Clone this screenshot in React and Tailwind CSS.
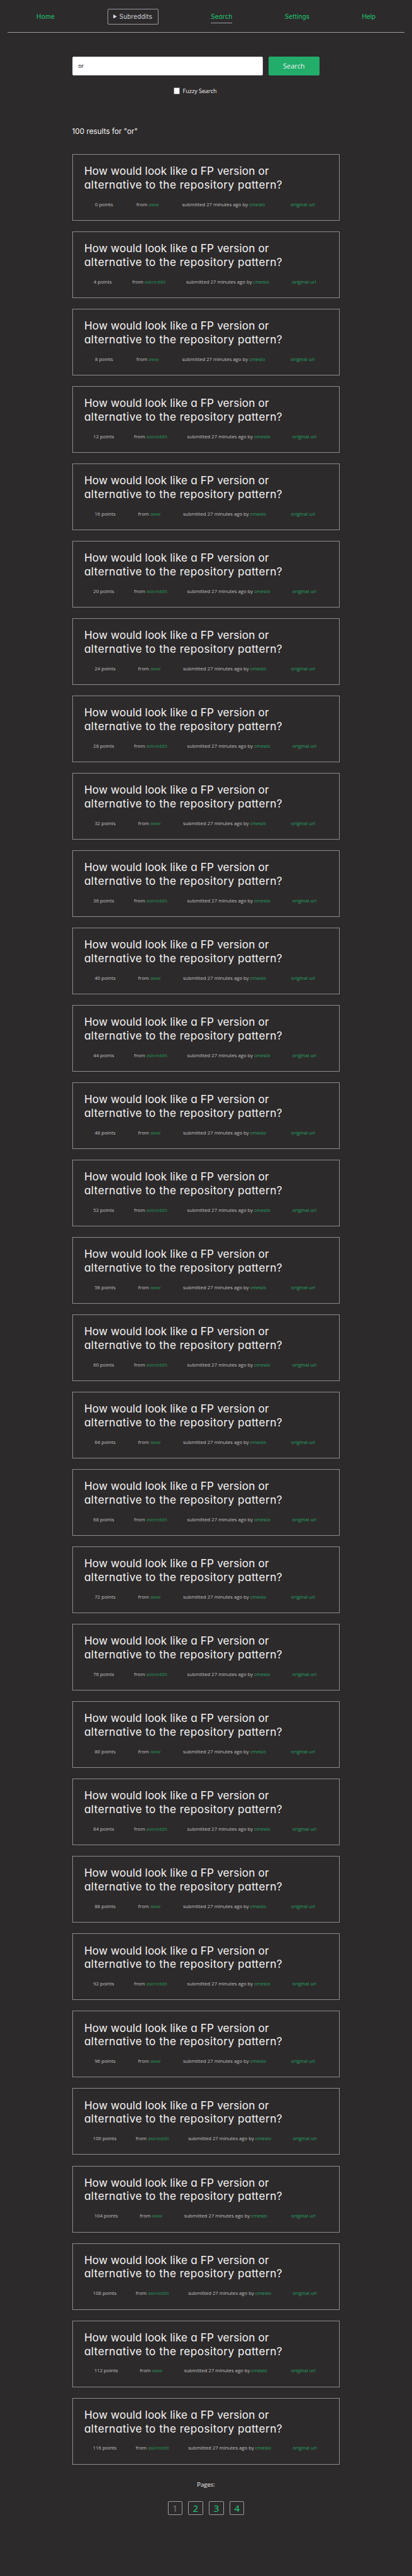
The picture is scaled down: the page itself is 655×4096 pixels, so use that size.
import React from "react";

const results = Array.from({ length: 30 }, (_, i) => ({
  points: i * 4,
  subreddit: i % 2 === 0 ? "aww" : "askreddit",
}));

const pages = [1, 2, 3, 4];

function Nav() {
  return (
    <header className="mx-[12.3px] h-[51.7px] border-b border-[#9b9da1] px-[4.1px] pt-[1.6px]">
      <nav className="flex h-full items-center justify-around text-[9.9px] leading-[14px] tracking-[0.2px] whitespace-nowrap text-[#1fcb74] font-['Inter','Noto_Sans',sans-serif] [font-feature-settings:'cv11']">
        <a className="w-[29.2px] tracking-[0.35px]">Home</a>
        <div className="flex h-[25px] w-[81.4px] items-center rounded-[2px] border border-[#9b9da1] pl-[8.2px] text-[#d1d5db]">
          <svg className="mr-[4px] h-[6.6px] w-[6px] shrink-0" viewBox="0 0 10 11" fill="currentColor">
            <path d="M0 0 L10 5.5 L0 11 Z" />
          </svg>
          Subreddits
        </div>
        <a className="h-[21px] w-[34.3px] border-b border-[#9b9da1] pt-[3px]">Search</a>
        <a className="w-[39.4px]">Settings</a>
        <a className="w-[21.5px] tracking-[0px]">Help</a>
      </nav>
    </header>
  );
}

function SearchForm() {
  return (
    <form className="mt-[38.4px] text-[9px] text-[#f5f5f5]">
      <div className="flex h-[29.75px] gap-[9.2px]">
        <div className="flex w-[303.1px] items-center rounded-[2px] border border-[#d1d5db] bg-white pl-[8.6px] text-black">
          or
        </div>
        <button
          type="button"
          className="w-[80.9px] rounded-[2px] bg-[#22ad6a] text-[10.9px] text-[#f5f5f5]"
        >
          Search
        </button>
      </div>
      <label className="mt-[18.7px] flex h-[12px] items-center gap-[4.2px] pl-[161.2px] leading-[12px]">
        <span className="h-[10.7px] w-[10.6px] rounded-[1.5px] border-[0.5px] border-[#767676] bg-white" />
        Fuzzy Search
      </label>
    </form>
  );
}

function Result({ points, subreddit }) {
  return (
    <article className="h-[106px] border border-[#8b8c8f] pt-[15.1px] pl-[18.3px]">
      <h2 className="text-[17.2px] leading-[21.85px] whitespace-nowrap text-[#f5f5f5] font-['Inter','Noto_Sans',sans-serif] [font-feature-settings:'cv11']">
        <span className="block tracking-[0.13px]">How would look like a FP version or</span>
        <span className="block tracking-[0.46px]">alternative to the repository pattern?</span>
      </h2>
      <div className="mt-[14.1px] -ml-[1.4px] flex w-[386.5px] justify-around text-[7.68px] leading-[12px] whitespace-nowrap text-[#c0c0c0]">
        <span>{points} points</span>
        <span>
          from <a className="text-[#239055]">{subreddit}</a>
        </span>
        <span className="pr-[3.5px] tracking-[0.02px]">
          submitted 27 minutes ago by <a className="text-[#22a664]">cmeslo</a>
        </span>
        <a className="text-[#22a664]">original url</a>
      </div>
    </article>
  );
}

function Pagination() {
  return (
    <footer className="mt-[26.6px]">
      <p className="text-center text-[9.5px] leading-[12px] text-[#f5f5f5]">Pages:</p>
      <ul className="mt-[19.7px] flex justify-center gap-[9.2px] text-[14.8px]">
        {pages.map((page) => (
          <li
            key={page}
            className={
              page === 1
                ? "flex h-[22.5px] w-[23.6px] items-center justify-center rounded-[2px] border border-[#9b9da1] text-[#85807d]"
                : "flex h-[22.5px] w-[23.6px] items-center justify-center rounded-[2px] border border-[#9b9da1] text-[#1fd57f]"
            }
          >
            {page}
          </li>
        ))}
      </ul>
    </footer>
  );
}

export default function App() {
  return (
    <div className="h-[4096px] w-[655px] overflow-hidden bg-[#2d2a2b] font-['Open_Sans','Noto_Sans',sans-serif]">
      <Nav />
      <main className="mx-auto w-[425.8px]">
        <SearchForm />
        <p className="mt-[50.5px] text-[11.75px] leading-[16px] text-[#f5f5f5] font-['Inter','Noto_Sans',sans-serif]">
          100 results for "or"
        </p>
        <div className="mt-[27.7px] flex flex-col gap-[17.04px]">
          {results.map((result) => (
            <Result key={result.points} {...result} />
          ))}
        </div>
        <Pagination />
      </main>
    </div>
  );
}
